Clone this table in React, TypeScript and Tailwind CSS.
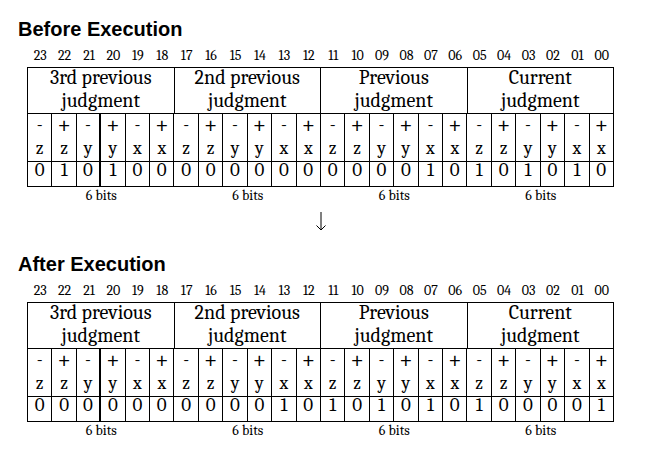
import React from 'react';

const LABELS = Array.from({ length: 24 }, (_, i) => String(23 - i).padStart(2, '0'));
const SIGNS = ['-', '+', '-', '+', '-', '+'];
const AXES = ['z', 'z', 'y', 'y', 'x', 'x'];
const GROUPS = [
  ['3rd previous', 'judgment'],
  ['2nd previous', 'judgment'],
  ['Previous', 'judgment'],
  ['Current', 'judgment'],
];

const BEFORE = '010100000000000010101010';
const AFTER = '000000000010101010100001';

function BitTable({ title, bits }: { title: string; bits: string }) {
  return (
    <div className="flex flex-col">
      <h2 className="pl-[18px] h-6 text-[20px] leading-6 font-bold font-[Liberation_Sans,Arial,sans-serif] text-black">
        {title}
      </h2>

      <div className="ml-[27px] w-[587px] flex flex-col font-serif text-black">
        {/* bit numbers */}
        <div className="grid grid-cols-24 h-[26px] pl-px">
          {LABELS.map((l) => (
            <div key={l} className="flex items-end justify-center pb-[3px] text-[14px] leading-4">
              {l}
            </div>
          ))}
        </div>

        <div className="flex flex-col border-l border-t border-black">
          {/* judgment groups */}
          <div className="grid grid-cols-4">
            {GROUPS.map((g, i) => (
              <div key={i} className="h-[46px] border-r border-b border-black text-center text-[20px] leading-[23px]">
                <div className="-mt-[2px]">
                  {g[0]}
                  <br />
                  {g[1]}
                </div>
              </div>
            ))}
          </div>

          {/* sign / axis */}
          <div className="grid grid-cols-24">
            {LABELS.map((l, i) => (
              <div
                key={l}
                className={
                  i === 2
                    ? 'h-[48px] border-r-2 border-b border-black text-center text-[18px] leading-6'
                    : 'h-[48px] border-r border-b border-black text-center text-[18px] leading-6'
                }
              >
                <div className={SIGNS[i % 6] === '+' ? '-mt-px h-6 text-[24px]' : '-mt-px h-6 text-[18px]'}>
                  {SIGNS[i % 6]}
                </div>
                <div className="h-6">{AXES[i % 6]}</div>
              </div>
            ))}
          </div>

          {/* bit values */}
          <div className="grid grid-cols-24">
            {bits.split('').map((b, i) => (
              <div
                key={i}
                className={
                  i === 2
                    ? 'h-[25px] border-r-2 border-b border-black text-center text-[19px] leading-[17px]'
                    : 'h-[25px] border-r border-b border-black text-center text-[19px] leading-[17px]'
                }
              >
                {b}
              </div>
            ))}
          </div>
        </div>

        {/* 6 bits */}
        <div className="grid grid-cols-4 h-5 pl-px">
          {GROUPS.map((_, i) => (
            <div key={i} className="pt-px text-center text-[14px] leading-4">
              6 bits
            </div>
          ))}
        </div>
      </div>
    </div>
  );
}

export default function App() {
  return (
    <div className="w-[648px] h-[468px] bg-white pt-[17px] flex flex-col">
      <BitTable title="Before Execution" bits={BEFORE} />

      {/* arrow */}
      <div className="ml-[27px] w-[587px] mt-[5px] flex justify-center">
        <svg width="12" height="20" viewBox="0 0 12 20" fill="none" stroke="#000" strokeWidth="1">
          <path d="M6 0 V18" />
          <path d="M1.5 13.5 L6 18 L10.5 13.5" />
        </svg>
      </div>

      <div className="mt-[20px]">
        <BitTable title="After Execution" bits={AFTER} />
      </div>
    </div>
  );
}
